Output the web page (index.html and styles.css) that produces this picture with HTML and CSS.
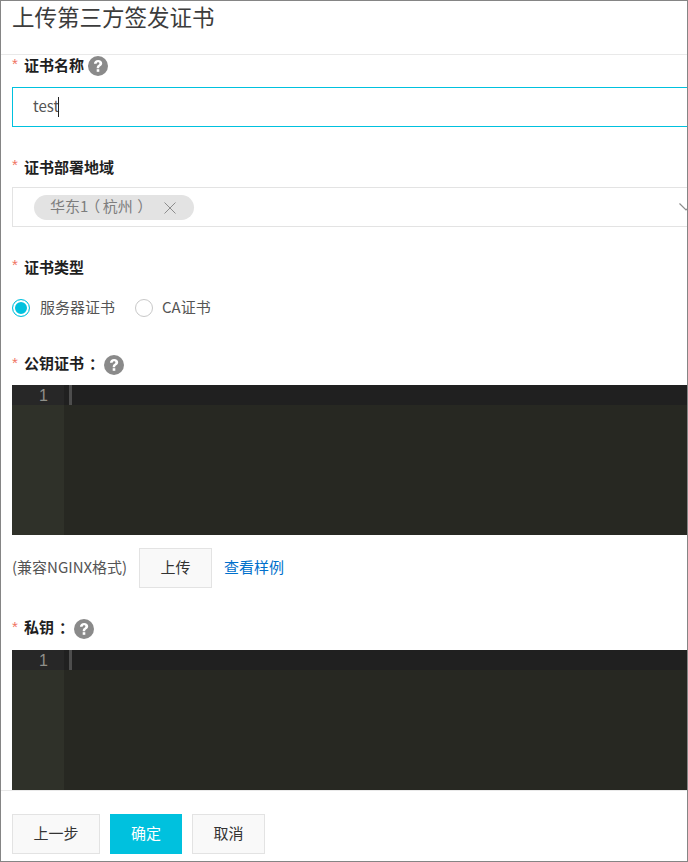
FILE: index.html
```html
<!DOCTYPE html>
<html lang="zh">
<head>
<meta charset="utf-8">
<title>上传第三方签发证书</title>
<link rel="stylesheet" href="styles.css">
</head>
<body>
<div class="dialog">
  <header class="head"><h1 class="title">上传第三方签发证书</h1></header>
  <main class="body">
    <div class="form">
      <div class="label name-label"><span class="star">*</span><b>证书名称</b>
        <svg class="help" viewBox="0 0 20 20"><circle cx="10" cy="10" r="10" fill="#8a8a8a"/><path d="M5.9 7.8C6 5.2 7.7 3.9 10.1 3.9c2.5 0 4.1 1.4 4.1 3.4 0 1.5-.8 2.3-1.9 3-.9.6-1.1 1-1.1 1.9H8.7c0-1.7.4-2.5 1.5-3.3.8-.5 1.2-1 1.2-1.5 0-.7-.5-1.2-1.3-1.2-.9 0-1.4.5-1.5 1.6z" fill="#fff"/><rect x="8.7" y="13.2" width="2.6" height="2.6" fill="#fff"/></svg>
      </div>
      <div class="input"><span class="input-text">test</span><span class="caret"></span></div>

      <div class="label region-label"><span class="star">*</span><b>证书部署地域</b></div>
      <div class="select">
        <span class="tag"><span class="tag-text">华东1<span class="paren-open">（</span>杭州<span class="paren-close">）</span></span>
          <svg class="tag-x" viewBox="0 0 12 12"><path d="M.5.5l11 11M11.5.5l-11 11" stroke="#8c8c8c" fill="none"/></svg>
        </span>
        <svg class="chevron" viewBox="0 0 14 8"><path d="M.5.5L7 7l6.5-6.5" stroke="#8c8c8c" stroke-width="1.2" fill="none"/></svg>
      </div>

      <div class="label type-label"><span class="star">*</span><b>证书类型</b></div>
      <div class="radios">
        <span class="radio radio-on"></span><span class="radio-text">服务器证书</span>
        <span class="radio radio-off"></span><span class="radio-text">CA证书</span>
      </div>

      <div class="label pub-label"><span class="star">*</span><b>公钥证书<span class="colon">：</span></b>
        <svg class="help" viewBox="0 0 20 20"><circle cx="10" cy="10" r="10" fill="#8a8a8a"/><path d="M5.9 7.8C6 5.2 7.7 3.9 10.1 3.9c2.5 0 4.1 1.4 4.1 3.4 0 1.5-.8 2.3-1.9 3-.9.6-1.1 1-1.1 1.9H8.7c0-1.7.4-2.5 1.5-3.3.8-.5 1.2-1 1.2-1.5 0-.7-.5-1.2-1.3-1.2-.9 0-1.4.5-1.5 1.6z" fill="#fff"/><rect x="8.7" y="13.2" width="2.6" height="2.6" fill="#fff"/></svg>
      </div>
      <div class="editor editor-pub">
        <div class="gutter"><div class="gutter-line">1</div></div>
        <div class="code"><div class="code-line"><span class="cursor"></span></div></div>
      </div>

      <div class="upload-row">
        <span class="hint">(兼容NGINX格式)</span>
        <span class="btn upload">上传</span>
        <a class="link">查看样例</a>
      </div>

      <div class="label key-label"><span class="star">*</span><b>私钥<span class="colon">：</span></b>
        <svg class="help" viewBox="0 0 20 20"><circle cx="10" cy="10" r="10" fill="#8a8a8a"/><path d="M5.9 7.8C6 5.2 7.7 3.9 10.1 3.9c2.5 0 4.1 1.4 4.1 3.4 0 1.5-.8 2.3-1.9 3-.9.6-1.1 1-1.1 1.9H8.7c0-1.7.4-2.5 1.5-3.3.8-.5 1.2-1 1.2-1.5 0-.7-.5-1.2-1.3-1.2-.9 0-1.4.5-1.5 1.6z" fill="#fff"/><rect x="8.7" y="13.2" width="2.6" height="2.6" fill="#fff"/></svg>
      </div>
      <div class="editor editor-key">
        <div class="gutter"><div class="gutter-line">1</div></div>
        <div class="code"><div class="code-line"><span class="cursor"></span></div></div>
      </div>
    </div>
  </main>
  <footer class="foot">
    <span class="btn prev">上一步</span>
    <span class="btn primary">确定</span>
    <span class="btn cancel">取消</span>
  </footer>
</div>
</body>
</html>
```

FILE: styles.css
```css
* { box-sizing: border-box; }
html, body { margin: 0; padding: 0; background: #fff; }
body {
  width: 688px;
  height: 862px;
  overflow: hidden;
  font-family: "Noto Sans CJK SC", "Open Sans", "Liberation Sans", sans-serif;
  font-size: 15px;
  color: #333;
}
.dialog {
  width: 688px;
  height: 862px;
  border: 1px solid #858585;
  display: flex;
  flex-direction: column;
  overflow: hidden;
}
.head {
  flex: 0 0 54px;
  border-bottom: 1px solid #e9e9e9;
  padding: 0 11px;
}
.title {
  margin: 0;
  font-size: 22.5px;
  font-weight: 400;
  line-height: 30px;
  color: #3c3c3c;
}
.body {
  flex: 0 0 735px;
  overflow: hidden;
  padding-left: 11px;
}
.form { width: 720px; }
.label {
  display: flex;
  align-items: center;
  height: 22px;
  font-size: 15px;
  color: #1f1f1f;
}
.label b { font-weight: 700; padding-bottom: 2px; line-height: 20px; }
.region-label b, .type-label b { padding-bottom: 0; }
.pub-label b, .key-label b { padding-bottom: 4px; }
.star {
  color: #f0735f;
  width: 12px;
  font-size: 15px;
  line-height: 16px;
  padding-bottom: 4px;
  font-family: "Liberation Sans", sans-serif;
}
.help { width: 20px; height: 20px; margin-left: 4px; }
.colon { position: relative; left: 5px; }
.pub-label .help, .key-label .help { margin-left: 5px; }
.input {
  margin-top: 10px;
  height: 40px;
  border: 1px solid #00c1de;
  display: flex;
  align-items: center;
  padding-left: 20px;
  font-size: 15px;
  color: #555;
}
.input-text { line-height: 20px; padding-bottom: 2px; }
.caret { width: 1px; height: 20px; background: #222; margin-left: -1px; }
.region-label { margin-top: 29px; }
.select {
  margin-top: 9px;
  height: 40px;
  border: 1px solid #e3e3e3;
  display: flex;
  align-items: center;
  padding-left: 21px;
  position: relative;
}
.tag {
  width: 160px;
  height: 25px;
  border-radius: 13px;
  background: #e3e3e3;
  color: #7d7d7d;
  font-size: 15px;
  display: flex;
  align-items: center;
  padding-left: 16px;
  position: relative;
}
.tag-text { line-height: 20px; padding-bottom: 2px; white-space: nowrap; }
.paren-open { font-feature-settings: "palt"; margin: 0 3px 0 4px; }
.paren-close { font-feature-settings: "palt"; margin-left: 5px; }
.tag-x { position: absolute; left: 130px; top: 7px; width: 12px; height: 12px; }
.chevron { position: absolute; left: 666px; top: 15px; width: 14px; height: 8px; }
.type-label { margin-top: 29px; }
.radios {
  margin-top: 18px;
  height: 24px;
  display: flex;
  align-items: center;
  font-size: 15px;
  color: #555;
}
.radio-text { line-height: 20px; padding-bottom: 2px; }
.radio {
  width: 18px;
  height: 18px;
  border-radius: 50%;
  margin-right: 10px;
  background: #fff;
}
.radio-on { border: 1px solid #00c1de; box-shadow: inset 0 0 0 2px #fff, inset 0 0 0 9px #00c1de; }
.radio-off { border: 1px solid #c8c8c8; margin-left: 20px; margin-right: 9px; }
.pub-label { margin-top: 34px; }
.editor {
  display: flex;
  background: #272822;
  overflow: hidden;
}
.editor-pub { height: 150px; margin-top: 9px; }
.editor-key { height: 140px; margin-top: 10px; }
.gutter { width: 52px; background: #2f3129; color: #8f908a; flex: none; }
.gutter-line {
  height: 20px;
  background: #272727;
  font-family: "Liberation Sans", sans-serif;
  font-size: 16px;
  line-height: 22px;
  text-align: right;
  padding-right: 16px;
}
.code { flex: 1; }
.code-line { height: 20px; background: #202020; padding-left: 5px; }
.cursor { display: block; width: 3px; height: 20px; background: #4d4d4d; }
.upload-row {
  margin-top: 13px;
  height: 40px;
  display: flex;
  align-items: center;
}
.hint { font-size: 15px; color: #555; width: 127px; line-height: 20px; padding-bottom: 3px; }
.btn {
  display: flex;
  align-items: center;
  justify-content: center;
  height: 40px;
  border: 1px solid #e3e3e3;
  background: #f9f9f9;
  color: #333;
  font-size: 15px;
  line-height: 20px;
  padding-bottom: 3px;
}
.upload { width: 73px; }
.link { margin-left: 12px; color: #0070cc; font-size: 15px; line-height: 20px; padding-bottom: 3px; }
.key-label { margin-top: 30px; }
.foot {
  flex: 1;
  border-top: 1px solid #e9e9e9;
  padding: 23px 0 0 11px;
  display: flex;
  align-items: flex-start;
  gap: 10px;
}
.prev { width: 88px; }
.primary { width: 72px; background: #00c1de; border-color: #00c1de; color: #fff; }
.cancel { width: 73px; }
```
